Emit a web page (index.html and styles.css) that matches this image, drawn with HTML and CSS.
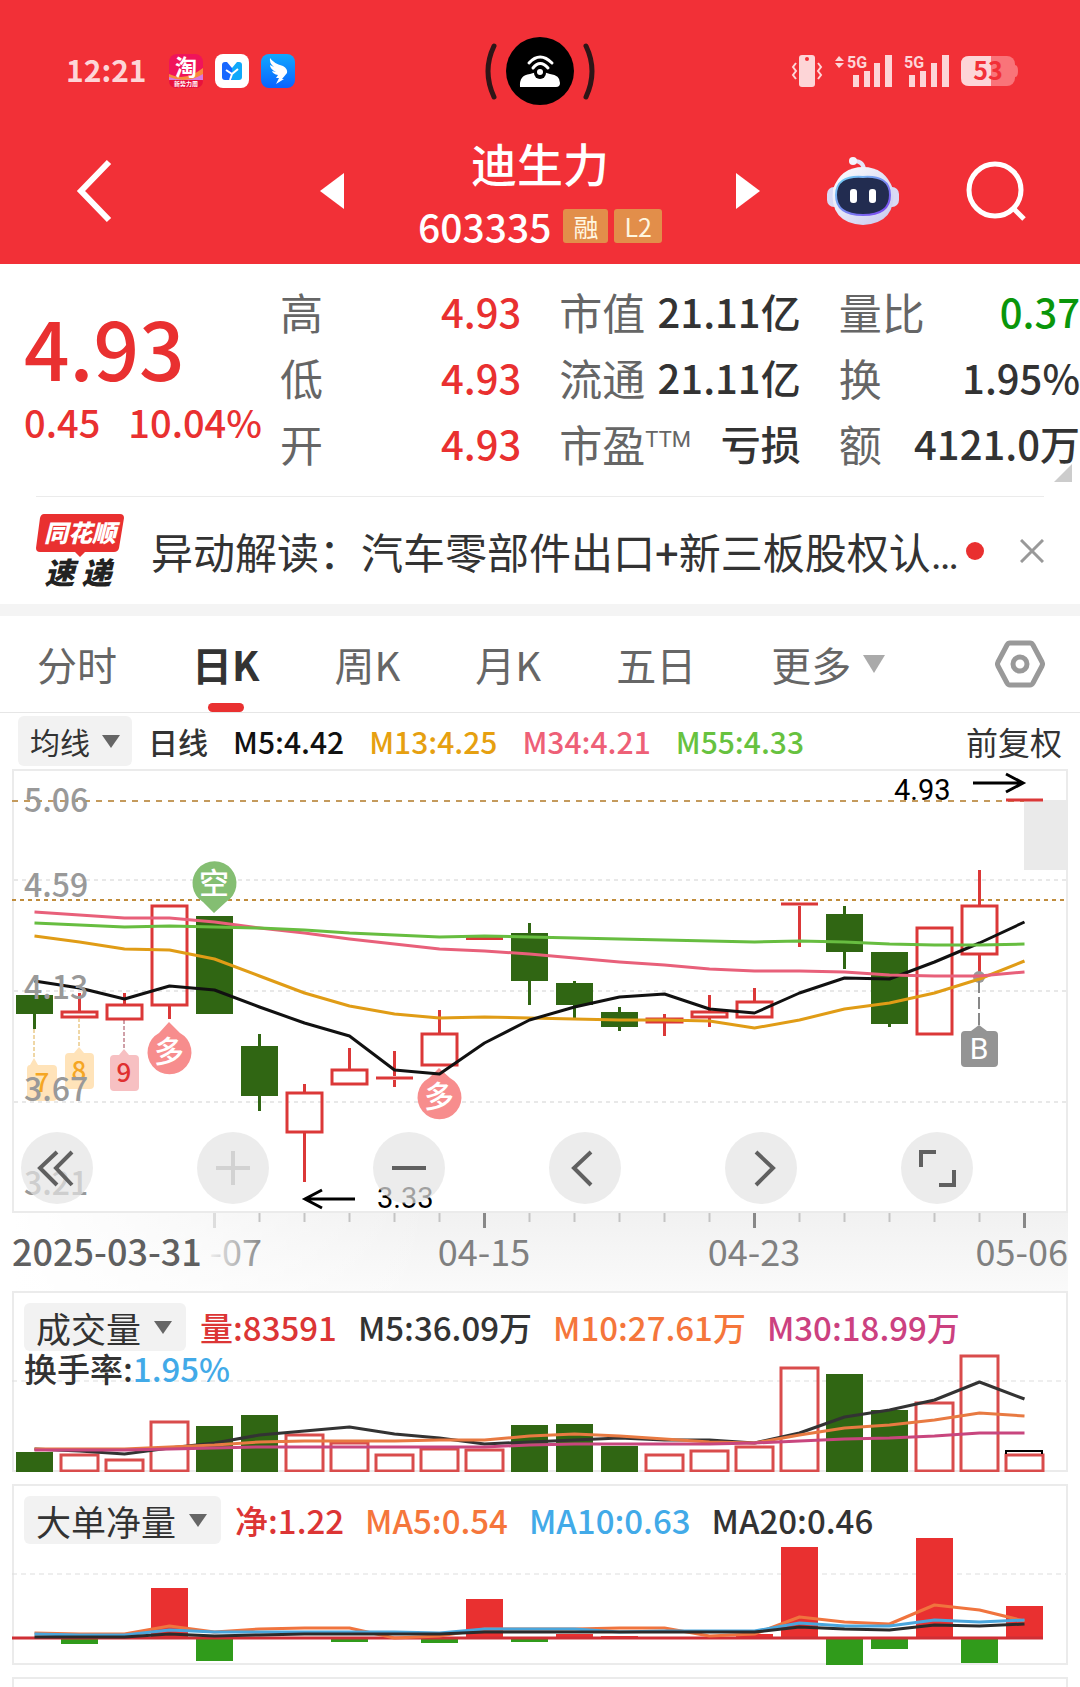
FILE: index.html
```html
<!DOCTYPE html>
<html lang="zh-CN">
<head>
    <meta charset="UTF-8">
    <meta name="viewport" content="width=device-width, initial-scale=1.0">
    <title>迪生力 603335</title>
    <link rel="stylesheet" href="styles.css">
</head>
<body>
    <header class="top">
        <div class="status">
            <div class="status-left">
                <span class="clock">12:21</span>
                <svg class="app-icon" viewBox="0 0 34 34">
                    <rect width="34" height="34" rx="8" fill="#f0145a"/>
                    <path d="M0 20 Q16 28 34 14 V26 H0Z" fill="#f98a3c"/>
                    <path d="M0 23 Q18 30 34 20 V27 H0Z" fill="#d978e0"/>
                    <path d="M0 26 H34 Q34 34 26 34 H8 Q0 34 0 26Z" fill="#e8123c"/>
                    <text x="17" y="21" class="app-big">淘</text>
                    <text x="17" y="32" class="app-small">新势力周</text>
                </svg>
                <svg class="app-icon" viewBox="0 0 34 34">
                    <rect width="34" height="34" rx="8" fill="#fff"/>
                    <path d="M7 11 Q7 8 10 8 H12 L17 14 V26 H10 Q7 26 7 23Z" fill="#1767ff"/>
                    <path d="M27 11 Q27 8 24 8 H22 L17 14 V26 H24 Q27 26 27 23Z" fill="#10a8fa"/>
                    <path d="M12 6 L17 12 22 6Z" fill="#fff"/>
                    <path d="M11 16 L17 20 23 15 M17 20 L15 26" fill="none" stroke="#fff" stroke-width="2"/>
                </svg>
                <svg class="app-icon" viewBox="0 0 34 34">
                    <defs><linearGradient id="sky" x2="0" y2="1"><stop offset="0" stop-color="#10a8ff"/><stop offset="1" stop-color="#0a62ff"/></linearGradient></defs>
                    <rect width="34" height="34" rx="8" fill="url(#sky)"/>
                    <path d="M9 4 Q12 9 22 12 Q27 15 26 19 L21 25 H23 L15 30 L18 24 H15 L17 21 Q12 20 11 17 L15 18 Q9 15 9 11 L13 13 Q8 9 9 4Z" fill="#fff"/>
                </svg>
            </div>
            <svg class="island" viewBox="0 0 112 68">
                <path d="M10 9 Q-2 34 10 60 M102 9 Q114 34 102 60" fill="none" stroke="#2e1517" stroke-width="5" stroke-linecap="round"/>
                <circle cx="56" cy="34" r="34"/>
                <path d="M36 50 Q35 38 46 37 Q56 33 66 37 Q76 38 76 46 Q76 50 72 50Z" fill="#fff"/>
                <path d="M45 26 Q56 14 68 26 M49 31 Q56 22 64 31" fill="none" stroke="#fff" stroke-width="3" stroke-linecap="round"/>
                <circle cx="56" cy="36" r="6"/>
                <circle cx="56" cy="35" r="3" fill="#fff"/>
            </svg>
            <div class="status-right">
                <svg class="vibrate" viewBox="0 0 32 32">
                    <rect x="8" width="16" height="32" rx="3" fill="#fdd5d7"/>
                    <circle cx="16" cy="4" r="2" fill="#f23037"/>
                    <path d="M5 8 L2 12 5 16 2 20 5 24 M27 8 L30 12 27 16 30 20 27 24" fill="none" stroke="#fdd5d7" stroke-width="2"/>
                </svg>
                <svg class="signal wide" viewBox="0 0 57 32" fill="#fdd5d7">
                    <path d="M0 6 L4 1 9 6Z M0 8 H9 L4 13Z"/>
                    <text x="12" y="13" class="net">5G</text>
                    <path d="M18 20h6v12h-6z M29 16h6v16h-6z M39 8h6v24h-6z M50 0h7v32h-7z"/>
                </svg>
                <svg class="signal" viewBox="0 0 45 32" fill="#fdd5d7">
                    <text x="0" y="13" class="net">5G</text>
                    <path d="M5 20h6v12h-6z M16 16h6v16h-6z M27 8h6v24h-6z M38 0h7v32h-7z"/>
                </svg>
                <svg class="battery" viewBox="0 0 57 30">
                    <rect width="54" height="30" rx="8" fill="#f97479"/>
                    <path d="M54 9 Q57 9 57 15 Q57 21 54 21Z" fill="#f97479"/>
                    <path d="M8 0 H30 V30 H8 Q0 30 0 22 V8 Q0 0 8 0Z" fill="#fdd5d7"/>
                    <text x="27" y="24" class="level">53</text>
                </svg>
            </div>
        </div>
        <nav class="nav">
            <div class="nav-left">
                <button class="icon-btn" aria-label="返回">
                    <svg width="36" height="64" viewBox="0 0 36 64"><path d="M33 3 L5 32 33 61" fill="none" stroke="#fff" stroke-width="6"/></svg>
                </button>
                <button class="icon-btn" aria-label="上一只">
                    <svg width="24" height="36" viewBox="0 0 24 36"><path d="M24 0 V36 L0 18Z" fill="#fff"/></svg>
                </button>
            </div>
            <div class="title">
                <h1>迪生力</h1>
                <div class="code-row">
                    <span class="code">603335</span>
                    <span class="badge">融</span>
                    <span class="badge">L2</span>
                </div>
            </div>
            <div class="nav-right">
                <button class="icon-btn" aria-label="下一只">
                    <svg width="24" height="36" viewBox="0 0 24 36"><path d="M0 0 V36 L24 18Z" fill="#fff"/></svg>
                </button>
                <button class="icon-btn" aria-label="智能助手">
                    <svg width="72" height="68" viewBox="0 0 72 68">
                        <defs>
                            <linearGradient id="shell" x2="1" y2="1"><stop offset="0" stop-color="#fff"/><stop offset="1" stop-color="#c6c8ee"/></linearGradient>
                            <linearGradient id="rim" x2="1" y2="1"><stop offset="0" stop-color="#74d6f4"/><stop offset="1" stop-color="#7b3ff0"/></linearGradient>
                        </defs>
                        <path d="M27 4 Q37 4 37 14" fill="none" stroke="#e4e4f8" stroke-width="4"/>
                        <circle cx="26" cy="4" r="4" fill="#f4f4fd"/>
                        <rect y="30" width="72" height="20" rx="7" fill="#d9daf5"/>
                        <path d="M36 10 Q58 10 66 32 Q70 66 36 68 Q2 66 6 32 Q14 10 36 10Z" fill="url(#shell)"/>
                        <path d="M36 20 Q63 18 63 38 Q63 58 36 58 Q9 58 9 38 Q9 18 36 20Z" fill="#222c50" stroke="url(#rim)" stroke-width="2"/>
                        <rect x="23" y="32" width="7" height="14" rx="3" fill="#fff"/>
                        <rect x="42" y="32" width="7" height="14" rx="3" fill="#fff"/>
                    </svg>
                </button>
                <button class="icon-btn" aria-label="搜索">
                    <svg width="60" height="60" viewBox="0 0 60 60"><circle cx="29" cy="29" r="26" fill="none" stroke="#fff" stroke-width="5"/><path d="M47 47 L58 58" stroke="#fff" stroke-width="5"/></svg>
                </button>
            </div>
        </nav>
    </header>

    <main>
        <section class="quote">
            <div class="price-block">
                <div class="price">4.93</div>
                <div class="change"><span>0.45</span><span>10.04%</span></div>
            </div>
            <dl class="stats">
                <div><dt>高</dt><dd class="up">4.93</dd></div>
                <div><dt>低</dt><dd class="up">4.93</dd></div>
                <div><dt>开</dt><dd class="up">4.93</dd></div>
            </dl>
            <dl class="stats">
                <div><dt>市值</dt><dd>21.11亿</dd></div>
                <div><dt>流通</dt><dd>21.11亿</dd></div>
                <div><dt>市盈<sup>TTM</sup></dt><dd>亏损</dd></div>
            </dl>
            <dl class="stats">
                <div><dt>量比</dt><dd class="down">0.37</dd></div>
                <div><dt>换</dt><dd>1.95%</dd></div>
                <div><dt>额</dt><dd>4121.0万</dd></div>
            </dl>
            <span class="corner"></span>
        </section>

        <section class="news">
            <svg class="news-logo" viewBox="0 0 88 74">
                <path d="M8 0 H84 Q88 0 88 4 L83 34 Q82 38 78 38 H49 L44 43 39 38 H4 Q0 38 0 34 L4 4 Q5 0 8 0Z" fill="#e93030"/>
                <text x="44" y="28" class="logo-top">同花顺</text>
                <text x="42" y="70" class="logo-bottom">速 递</text>
            </svg>
            <a class="news-text" href="#">异动解读：汽车零部件出口+新三板股权认…</a>
            <span class="dot"></span>
            <button class="icon-btn close" aria-label="关闭">
                <svg width="24" height="24" viewBox="0 0 24 24"><path d="M1 1 L23 23 M23 1 L1 23" stroke="#999" stroke-width="3"/></svg>
            </button>
        </section>

        <div class="tabs">
            <button class="tab">分时</button>
            <button class="tab active">日K</button>
            <button class="tab">周K</button>
            <button class="tab">月K</button>
            <button class="tab">五日</button>
            <button class="tab more">更多</button>
            <button class="icon-btn settings" aria-label="设置">
                <svg width="50" height="48" viewBox="0 0 50 48" fill="none" stroke="#999" stroke-width="5"><path d="M15 3 H35 Q37 3 38 5 L47 22 Q48 24 47 26 L38 43 Q37 45 35 45 H15 Q13 45 12 43 L3 26 Q2 24 3 22 L12 5 Q13 3 15 3Z"/><circle cx="25" cy="24" r="7"/></svg>
            </button>
        </div>

        <div class="legend">
            <label class="pick"><select aria-label="主图指标"><option>均线</option></select></label>
            <span>日线</span>
            <span class="c-black">M5:4.42</span>
            <span class="c-gold">M13:4.25</span>
            <span class="c-rose">M34:4.21</span>
            <span class="c-lime">M55:4.33</span>
            <span class="adjust">前复权</span>
        </div>

        <section class="panel kline">
            <svg class="chart" viewBox="0 0 1056 444">
                <rect class="frame" x="1" y="1" width="1054" height="442"/>
                <g transform="translate(2 2)">
                    <path class="grid" d="M0 109H1052 M0 220H1052 M0 331H1052"/>
                    <path class="limit" d="M-2 30H1050"/>
                    <path class="cost" d="M-2 129H1050"/>
                    <rect x="1010" y="29" width="44" height="70" fill="#eaeaea"/>
                    <g id="candles"></g>
                    <g class="tag gold">
                        <path class="leader" d="M20 258V288 M65 247V277"/>
                        <path class="box" d="M16 294L20 287 24 294H39Q43 294 43 298V326Q43 330 39 330H17Q13 330 13 326V298Q13 294 16 294Z M55 282H60L65 276 70 282H76Q80 282 80 286V314Q80 318 76 318H55Q51 318 51 314V286Q51 282 55 282Z"/>
                        <text x="28" y="321">7</text>
                        <text x="65" y="309">8</text>
                    </g>
                    <g class="tag red">
                        <path class="leader" d="M110 249V279"/>
                        <path class="box" d="M100 284H105L110 278 115 284H121Q125 284 125 288V316Q125 320 121 320H100Q96 320 96 316V288Q96 284 100 284Z"/>
                        <text x="110" y="311">9</text>
                    </g>
                    <g class="sign">
                        <path fill="#84be72" d="M200 142L189 131A22 22 0 1 1 212 131Z"/>
                        <text x="200" y="123">空</text>
                        <path fill="#f78d8d" d="M155 251L166 262A22 22 0 1 1 145 262Z"/>
                        <text x="155" y="291">多</text>
                        <path fill="#f78d8d" d="M425 297L436 307A22 22 0 1 1 415 307Z"/>
                        <text x="425" y="336">多</text>
                    </g>
                    <circle cx="965" cy="206" r="6" fill="#999"/>
                    <path d="M965 210V255" stroke="#888" stroke-width="2" stroke-dasharray="12 4"/>
                    <path d="M957 260L965 254 973 260H980Q984 260 984 264V292Q984 296 980 296H951Q947 296 947 292V264Q947 260 951 260Z" fill="#949494"/>
                    <text x="965" y="288" class="buy">B</text>
                    <g id="averages"></g>
                    <g class="scale">
                        <text x="10" y="41">5.06</text>
                        <text x="10" y="126">4.59</text>
                        <text x="10" y="228">4.13</text>
                        <text x="10" y="330">3.67</text>
                        <text x="10" y="424">3.21</text>
                    </g>
                    <g class="peak">
                        <text x="880" y="29">4.93</text>
                        <path d="M959 12H1009 M992 3L1009 12 992 21"/>
                        <text x="363" y="437">3.33</text>
                        <path d="M341 428H291 M308 419L291 428 308 437"/>
                    </g>
                </g>
            </svg>
            <div class="tools">
                <button aria-label="最左"><svg viewBox="0 0 72 72"><path d="M36 20 L19 36 36 53 M51 20 L35 36 51 53"/></svg></button>
                <button aria-label="放大" disabled><svg viewBox="0 0 72 72"><path d="M19 36H53 M36 19V53"/></svg></button>
                <button aria-label="缩小"><svg viewBox="0 0 72 72"><path d="M19 36H53"/></svg></button>
                <button aria-label="左移"><svg viewBox="0 0 72 72"><path d="M42 20 L25 36 42 53"/></svg></button>
                <button aria-label="右移"><svg viewBox="0 0 72 72"><path d="M31 20 L48 36 31 53"/></svg></button>
                <button aria-label="全屏"><svg viewBox="0 0 72 72"><path d="M20 35V20H35 M53 38V53H38"/></svg></button>
            </div>
        </section>

        <svg class="axis" viewBox="0 0 1056 78">
            <defs><linearGradient id="fade"><stop offset="0" stop-color="#eee"/><stop offset="1" stop-color="#888"/></linearGradient></defs>
            <g id="ticks"></g>
            <text x="0" y="53" class="from">2025-03-31</text>
            <text x="250" y="53" text-anchor="end" fill="url(#fade)">-07</text>
            <text x="472" y="53" text-anchor="middle">04-15</text>
            <text x="742" y="53" text-anchor="middle">04-23</text>
            <text x="1056" y="53" text-anchor="end">05-06</text>
        </svg>

        <section class="panel">
            <svg class="chart" viewBox="0 0 1056 181">
                <rect class="frame" x="1" y="1" width="1054" height="179"/>
                <path class="thin-grid" d="M0 90H1054"/>
                <g id="volume"></g>
            </svg>
            <div class="panel-head">
                <div class="row">
                    <label class="pick"><select aria-label="副图指标一"><option>成交量</option></select></label>
                    <span class="c-red">量:83591</span>
                    <span>M5:36.09万</span>
                    <span class="c-orange">M10:27.61万</span>
                    <span class="c-magenta">M30:18.99万</span>
                </div>
                <div class="turnover">换手率:<span class="c-blue">1.95%</span></div>
            </div>
        </section>

        <section class="panel">
            <svg class="chart" viewBox="0 0 1056 181">
                <rect class="frame" x="1" y="1" width="1054" height="179"/>
                <path class="thin-grid" d="M0 90H1054"/>
                <g id="netflow"></g>
            </svg>
            <div class="panel-head">
                <div class="row">
                    <label class="pick"><select aria-label="副图指标二"><option>大单净量</option></select></label>
                    <span class="c-red">净:1.22</span>
                    <span class="c-orange">MA5:0.54</span>
                    <span class="c-blue">MA10:0.63</span>
                    <span>MA20:0.46</span>
                </div>
            </div>
        </section>

        <section class="panel next"></section>
    </main>
    <script src="chart.js"></script>
</body>
</html>
```
FILE: styles.css
```css
* {
    box-sizing: border-box;
}

body {
    margin: 0;
    background-color: #fff;
    color: #333;
    font-family: "Noto Sans CJK SC", "Noto Sans", sans-serif;
    font-weight: 500;
}

button, select {
    font: inherit;
    color: inherit;
    border: none;
    background: none;
    padding: 0;
    margin: 0;
}

button {
    cursor: pointer;
}

svg {
    display: block;
}

svg text {
    white-space: pre;
}

.icon-btn {
    display: flex;
}

/* header */
.top {
    background-color: #f23037;
    color: #fff;
}

.status {
    display: grid;
    grid-template-columns: 1fr auto 1fr;
    align-items: center;
    height: 136px;
    padding: 6px 62px 0;
}

.status-left, .status-right {
    display: flex;
    align-items: center;
    gap: 12px;
}

.status-right {
    justify-content: flex-end;
}

.status svg {
    overflow: visible;
}

.clock {
    margin: 0 10px 4px 4px;
    font-size: 30px;
    line-height: 30px;
    font-weight: 700;
    color: #fdd5d7;
}

.app-icon {
    width: 34px;
    height: 34px;
}

.app-big, .app-small {
    fill: #fff;
    text-anchor: middle;
    font-size: 22px;
    font-weight: 700;
}

.app-small {
    font-size: 6px;
}

.island {
    width: 112px;
    height: 68px;
}

.vibrate {
    width: 32px;
    height: 32px;
}

.signal {
    width: 45px;
    height: 32px;
}

.signal.wide {
    width: 57px;
}

.net {
    font-family: Roboto, sans-serif;
    font-size: 16px;
    font-weight: 700;
}

.battery {
    width: 57px;
    height: 30px;
}

.level {
    fill: #f23037;
    font-size: 25px;
    font-weight: 700;
    text-anchor: middle;
}

.nav {
    display: grid;
    grid-template-columns: 1fr auto 1fr;
}

.nav-left, .nav-right {
    display: flex;
    justify-content: space-between;
    align-items: center;
    padding: 0 74px 18px 76px;
}

.nav-right {
    padding: 0 54px 18px 74px;
}

.title {
    text-align: center;
}

.title h1 {
    margin: 0;
    font-size: 46px;
    line-height: 52px;
    font-weight: 500;
}

.code-row {
    display: flex;
    align-items: center;
    gap: 6px;
    height: 76px;
}

.code {
    margin-right: 6px;
    font-size: 39px;
}

.badge {
    padding: 0 10px;
    border-radius: 3px;
    background-color: #e28e4a;
    color: #fff6e0;
    font-size: 25px;
    font-weight: 400;
    line-height: 34px;
}

/* quote */
.quote {
    position: relative;
    display: grid;
    grid-template-columns: 242px 1fr 1fr 1fr;
    column-gap: 38px;
    padding: 14px 0 20px;
    font-size: 40px;
}

.price-block {
    padding-left: 24px;
    color: #e93030;
    white-space: nowrap;
}

.price {
    margin-top: 24px;
    font-size: 80px;
    line-height: 88px;
}

.change {
    display: flex;
    gap: 28px;
    font-size: 38px;
    line-height: 64px;
}

.stats {
    margin: 0;
}

.stats div {
    display: flex;
    justify-content: space-between;
    line-height: 66px;
    white-space: nowrap;
}

.stats dt {
    color: #666;
    font-size: 43px;
    font-weight: 400;
}

.stats dd {
    margin: 0;
}

.stats sup {
    font-family: Roboto, sans-serif;
    font-size: 22px;
    font-weight: 400;
    line-height: 0;
}

.up {
    color: #e93030;
}

.down {
    color: #0a960a;
}

.corner {
    position: absolute;
    right: 8px;
    bottom: 14px;
    border-left: 18px solid transparent;
    border-bottom: 18px solid #ccc;
}

/* news strip */
.news {
    display: flex;
    align-items: center;
    height: 108px;
    margin: 0 36px;
    border-top: 1px solid #ebebeb;
}

.news-logo {
    flex: none;
    width: 88px;
    height: 74px;
    margin-right: 27px;
}

.logo-top, .logo-bottom {
    font-size: 24px;
    font-weight: 900;
    font-style: italic;
    text-anchor: middle;
    fill: #fff;
}

.logo-bottom {
    font-size: 30px;
    fill: #222;
}

.news-text {
    flex: 1;
    overflow: hidden;
    color: #333;
    font-family: Roboto, "Noto Sans CJK SC", sans-serif;
    font-size: 42px;
    font-weight: 400;
    text-decoration: none;
    white-space: nowrap;
}

.dot {
    flex: none;
    width: 18px;
    height: 18px;
    margin-right: 36px;
    border-radius: 50%;
    background-color: #e93030;
}

/* period tabs */
.tabs {
    display: flex;
    align-items: center;
    gap: 75px;
    height: 109px;
    padding: 0 35px 0 37px;
    border-top: 12px solid #f4f4f4;
    border-bottom: 1px solid #e6e6e6;
    color: #666;
    font-size: 40px;
    font-weight: 400;
}

.tab {
    position: relative;
    height: 100%;
    white-space: nowrap;
}

.tab.active {
    color: #333;
    font-weight: 700;
}

.tab.active::after {
    content: "";
    position: absolute;
    left: 50%;
    bottom: 0;
    width: 36px;
    height: 9px;
    margin-left: -18px;
    border-radius: 5px;
    background-color: #e93030;
}

.tab.more {
    display: flex;
    align-items: center;
    gap: 12px;
}

.tab.more::after {
    content: "";
    border: 11px solid transparent;
    border-top: 18px solid #aaa;
    border-bottom: none;
}

.settings {
    margin-left: auto;
}

/* indicator legend */
.legend {
    display: flex;
    align-items: center;
    gap: 25px;
    height: 56px;
    padding: 0 18px;
    font-size: 30px;
    white-space: nowrap;
}

.legend .pick {
    height: 50px;
    margin-right: -9px;
    padding: 0 12px;
}

.adjust {
    margin-left: auto;
    font-size: 32px;
    font-weight: 400;
}

.pick {
    display: flex;
    align-items: center;
    gap: 12px;
    height: 48px;
    padding: 0 14px 0 12px;
    border-radius: 6px;
    background-color: #f2f2f2;
    font-weight: 400;
}

.pick select {
    appearance: none;
}

.pick::after {
    content: "";
    border: 9px solid transparent;
    border-top: 13px solid #666;
    border-bottom: none;
}

.c-black { color: #111; }
.c-gold { color: #e6a010; }
.c-rose { color: #ee6077; }
.c-lime { color: #67c23f; }
.c-red { color: #dc3535; }
.c-orange { color: #f5763b; }
.c-magenta { color: #cc4180; }
.c-blue { color: #42aae8; }

/* chart panels, header stacked over the drawing */
.panel {
    display: grid;
    margin: 0 12px 12px;
}

.panel > * {
    grid-area: 1 / 1;
}

.chart, .axis {
    width: 100%;
    height: auto;
}

.kline {
    margin-bottom: 0;
}

.next {
    height: 10px;
    margin-bottom: 0;
    border: 2px solid #ebebeb;
    border-bottom: none;
}

.panel-head {
    padding: 12px;
    font-size: 33px;
    white-space: nowrap;
}

.row {
    display: flex;
    align-items: center;
    gap: 21px;
    height: 48px;
}

.panel-head .pick {
    margin-right: -7px;
    font-size: 35px;
}

.turnover {
    line-height: 34px;
}

.tools {
    align-self: end;
    display: flex;
    gap: 104px;
    padding: 0 0 9px 9px;
}

.tools button {
    width: 72px;
    height: 72px;
    border-radius: 50%;
    background-color: rgba(228, 228, 228, 0.7);
}

.tools path {
    fill: none;
    stroke: #606060;
    stroke-width: 4;
}

.tools button:disabled path {
    stroke: #d2d2d2;
}

/* chart drawing */
.frame {
    fill: none;
    stroke: #ebebeb;
    stroke-width: 2;
}

.grid {
    stroke: #e8e8e8;
    stroke-width: 2;
    stroke-dasharray: 4 4;
}

.thin-grid {
    stroke: #ddd;
    stroke-dasharray: 5 4;
}

.limit {
    stroke: #c49a5c;
    stroke-width: 2;
    stroke-dasharray: 6 6;
}

.cost {
    stroke: #c08c3c;
    stroke-width: 2;
    stroke-dasharray: 4 4;
}

.fall {
    fill: #306613;
}

.fall-wick {
    stroke: #306613;
    stroke-width: 3;
}

.rise {
    fill: none;
    stroke: #db3838;
    stroke-width: 3;
}

.volume-rise {
    fill: none;
    stroke: #d94c4c;
    stroke-width: 3;
}

.flow-in {
    fill: #e93030;
}

.flow-out {
    fill: #309b1b;
}

.line {
    fill: none;
    stroke-width: 3;
    stroke-linejoin: round;
}

.scale {
    fill: #999;
    font-size: 32px;
}

.peak {
    font-family: Roboto, sans-serif;
    font-size: 29px;
    font-weight: 400;
}

.peak path {
    fill: none;
    stroke: #000;
    stroke-width: 3;
}

.sign {
    fill: #fff;
    font-size: 30px;
    text-anchor: middle;
}

.tag {
    font-size: 26px;
    text-anchor: middle;
}

.tag .leader {
    stroke-dasharray: 4 2;
}

.gold { fill: #f5a623; }
.gold .leader { stroke: #dfae4c; }
.gold .box { fill: #ffe3b9; }
.red { fill: #e03030; }
.red .leader { stroke: #a04050; }
.red .box { fill: #f7c0c2; }

.buy {
    fill: #fff;
    font-family: Roboto, sans-serif;
    font-size: 30px;
    font-weight: 400;
    text-anchor: middle;
}

.axis {
    width: calc(100% - 24px);
    margin: 0 12px;
    background: linear-gradient(to right, #fff, rgba(255, 255, 255, 0) 40%), linear-gradient(#f1f1f1, #fafafa);
    font-size: 36px;
    font-weight: 400;
    fill: #808080;
}

.axis .from {
    fill: #606060;
    font-weight: 500;
}
```
FILE: chart.js
```js
const STEP = 45;
const BODY = 37;

// [rising, top, bottom, high, low]
const candles = [
    [0, 224, 243, 224, 258], [1, 240, 247, 222, 247], [1, 233, 249, 222, 249], [1, 134, 235, 134, 248],
    [0, 145, 243, 145, 243], [0, 275, 325, 263, 340], [1, 321, 362, 313, 411], [1, 298, 314, 277, 314],
    [1, 305, 309, 280, 316], [1, 262, 295, 239, 295], [1, 166, 169, 166, 169], [0, 162, 210, 152, 234],
    [0, 212, 234, 210, 247], [0, 241, 256, 236, 260], [1, 247, 252, 243, 265], [1, 240, 247, 224, 256],
    [1, 230, 247, 217, 247], [1, 131, 135, 131, 176], [0, 143, 181, 135, 198], [0, 181, 253, 181, 256],
    [1, 156, 264, 156, 264], [1, 134, 184, 99, 206], [1, 27, 31, 27, 31]
];

const averages = [
    ['#e09c16', [165, 171, 178, 179, 188, 205, 222, 235, 243, 247, 246, 247, 248, 249, 249, 250, 257, 249, 238, 232, 222, 208, 190]],
    ['#111', [210, 217, 228, 215, 219, 236, 252, 265, 299, 303, 272, 249, 236, 226, 223, 238, 242, 222, 207, 208, 191, 172, 151]],
    ['#e8607a', [141, 144, 147, 147, 151, 157, 162, 168, 173, 178, 180, 183, 187, 191, 194, 198, 200, 200, 201, 204, 205, 205, 201]],
    ['#67bd40', [152, 154, 156, 155, 156, 157, 159, 162, 164, 166, 165, 166, 167, 168, 169, 170, 171, 170, 171, 173, 174, 174, 173]]
];

const volumeTops = [161, 164, 169, 131, 135, 124, 144, 152, 164, 158, 159, 134, 133, 155, 164, 160, 156, 77, 83, 119, 112, 65, 164];
const volumeLines = [
    ['#333', [158, 160, 163, 157, 152, 144, 140, 136, 143, 147, 153, 151, 149, 147, 149, 149, 152, 142, 126, 119, 109, 91, 108]],
    ['#e87a42', [158, 158, 158, 156, 154, 151, 150, 150, 150, 149, 149, 145, 143, 145, 148, 151, 152, 144, 137, 134, 129, 122, 125]],
    ['#c8467e', [159, 159, 159, 158, 157, 156, 156, 156, 156, 156, 156, 154, 153, 153, 153, 153, 152, 150, 148, 147, 145, 142, 142]]
];

// distance from the zero line, up is positive
const flows = [0, -5, 0, 50, -22, 0, 0, -3, 0, -4, 39, -3, 4, 2, 0, 0, 4, 91, -26, -10, 100, -24, 32];
const flowLines = [
    ['#f0743e', [149, 150, 150, 142, 148, 145, 144, 144, 154, 152, 145, 145, 145, 144, 144, 152, 150, 133, 138, 140, 121, 126, 137]],
    ['#4aa6dc', [150, 151, 151, 146, 148, 148, 148, 148, 148, 149, 145, 145, 145, 148, 147, 147, 147, 139, 142, 142, 136, 138, 136]],
    ['#2b2b2b', [153, 153, 153, 150, 152, 151, 150, 150, 150, 150, 148, 148, 148, 148, 148, 148, 148, 143, 145, 146, 141, 142, 140]]
];

function bar(cls, x, top, bottom, inset) {
    return `<rect class="${cls}" x="${x - BODY / 2 + inset}" y="${top + inset}" width="${BODY - inset * 2}" height="${Math.max(bottom - top - inset * 2, 1)}"/>`;
}

function lines(list, start) {
    return list.map(([color, ys]) =>
        `<polyline class="line" stroke="${color}" points="${ys.map((y, i) => `${start + i * STEP},${y}`).join(' ')}"/>`
    ).join('');
}

function draw(id, html) {
    document.getElementById(id).innerHTML = html;
}

draw('candles', candles.map(([rising, top, bottom, high, low], i) => {
    const x = 20.5 + i * STEP;
    const wick = `<path class="${rising ? 'rise' : 'fall-wick'}" d="M${x} ${high}V${top} M${x} ${bottom}V${low}"/>`;
    if (rising && bottom - top < 5) {
        return wick + `<path class="rise" d="M${x - BODY / 2} ${(top + bottom) / 2}h${BODY}"/>`;
    }
    return wick + (rising ? bar('rise', x, top, bottom, 1) : bar('fall', x, top, bottom, 0));
}).join(''));
draw('averages', lines(averages, 20.5));

draw('volume', volumeTops.map((top, i) => {
    const x = 22.5 + i * STEP;
    return candles[i][0] ? bar('volume-rise', x, top, 180, 0) : bar('fall', x, top, 181, 0);
}).join('') + lines(volumeLines, 22.5)
    + '<path d="M994 163V160H1030V163" fill="none" stroke="#000" stroke-width="2"/>');

draw('netflow', flows.map((v, i) => {
    const x = 22.5 + i * STEP;
    if (!v) return '';
    return v > 0 ? bar('flow-in', x, 154 - v, 154, 0) : bar('flow-out', x, 155, 155 - v, 0);
}).join('') + '<path d="M0 154H1031" stroke="#cf2f35" stroke-width="3"/>' + lines(flowLines, 22.5));

let ticks = '';
for (let i = 4; i < 23; i++) {
    const long = i % 6 === 4;
    const color = i === 4 ? '#ddd' : long ? '#888' : '#c4c4c4';
    ticks += `<path d="M${22.5 + i * STEP} 0V${long ? 15 : 9}" stroke="${color}" stroke-width="${long ? 3 : 2}"/>`;
}
draw('ticks', ticks);
```
